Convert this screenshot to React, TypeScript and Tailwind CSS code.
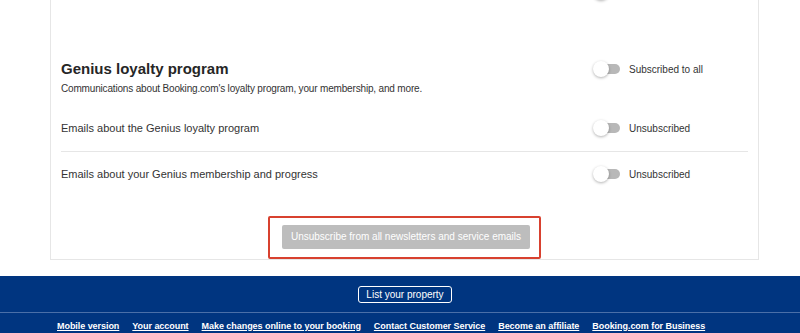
import React from "react";

function Toggle() {
  return (
    <div className="relative w-[27px] h-[16px] shrink-0">
      <div className="absolute left-[6px] top-[3px] w-[21px] h-[10px] rounded-full bg-[#b8b8b8]" />
      <div className="absolute left-0 top-0 w-[16px] h-[16px] rounded-full bg-white shadow-[0_1px_3px_rgba(0,0,0,0.3)]" />
    </div>
  );
}

function ToggleCell({ label }: { label: string }) {
  return (
    <div className="w-[155px] shrink-0 flex items-center gap-[9px]">
      <Toggle />
      <span className="text-[10px] text-[#333]">{label}</span>
    </div>
  );
}

export default function App() {
  const links = [
    "Mobile version",
    "Your account",
    "Make changes online to your booking",
    "Contact Customer Service",
    "Become an affiliate",
    "Booking.com for Business",
  ];
  return (
    <div className="w-[800px] h-[333px] overflow-hidden bg-white" style={{ fontFamily: '"Liberation Sans", Arial, sans-serif' }}>
      <div className="ml-[50px] w-[709px] border-x border-b border-[#e6e6e6] px-[10px] -mt-[16px]">
        <div className="flex justify-end h-[16px]">
          <ToggleCell label="" />
        </div>
        <div className="flex items-center h-[18px] mt-[60px]">
          <h2 className="flex-1 text-[15px] font-bold text-[#262626] leading-[18px]">Genius loyalty program</h2>
          <ToggleCell label="Subscribed to all" />
        </div>
        <p className="text-[10px] text-[#333] mt-[5px] leading-[12px] tracking-[-0.17px]">
          Communications about Booking.com's loyalty program, your membership, and more.
        </p>
        <div className="flex items-center h-[16px] mt-[25px]">
          <span className="flex-1 text-[11px] text-[#333]">Emails about the Genius loyalty program</span>
          <ToggleCell label="Unsubscribed" />
        </div>
        <div className="h-[16px] border-b border-[#e6e6e6]" />
        <div className="flex items-center h-[16px] mt-[14px]">
          <span className="flex-1 text-[11px] text-[#333]">Emails about your Genius membership and progress</span>
          <ToggleCell label="Unsubscribed" />
        </div>
        <div className="flex justify-center mt-[34px]">
          <div className="border-2 border-[#d8412f] rounded-[2px] pl-[12px] pr-[9px] pt-[5px] pb-[8px]">
            <button className="h-[24px] w-[248px] rounded-[2px] bg-[#bdbdbd] text-white text-[10px]">
              Unsubscribe from all newsletters and service emails
            </button>
          </div>
        </div>
      </div>
      <div className="mt-[16px] bg-[#003580]">
        <div className="flex justify-center pt-[10px] pb-[9px] pl-[10px]">
          <div className="border border-white rounded-[3px] px-[7px] h-[17px] flex items-center text-[10px] text-white">
            List your property
          </div>
        </div>
        <div className="border-t border-[#4a6fa8] h-[29px] flex items-center gap-[13px] pl-[57px]">
          {links.map((l) => (
            <a key={l} className="text-[9px] font-bold text-white underline tracking-[-0.05px]">{l}</a>
          ))}
        </div>
      </div>
    </div>
  );
}
